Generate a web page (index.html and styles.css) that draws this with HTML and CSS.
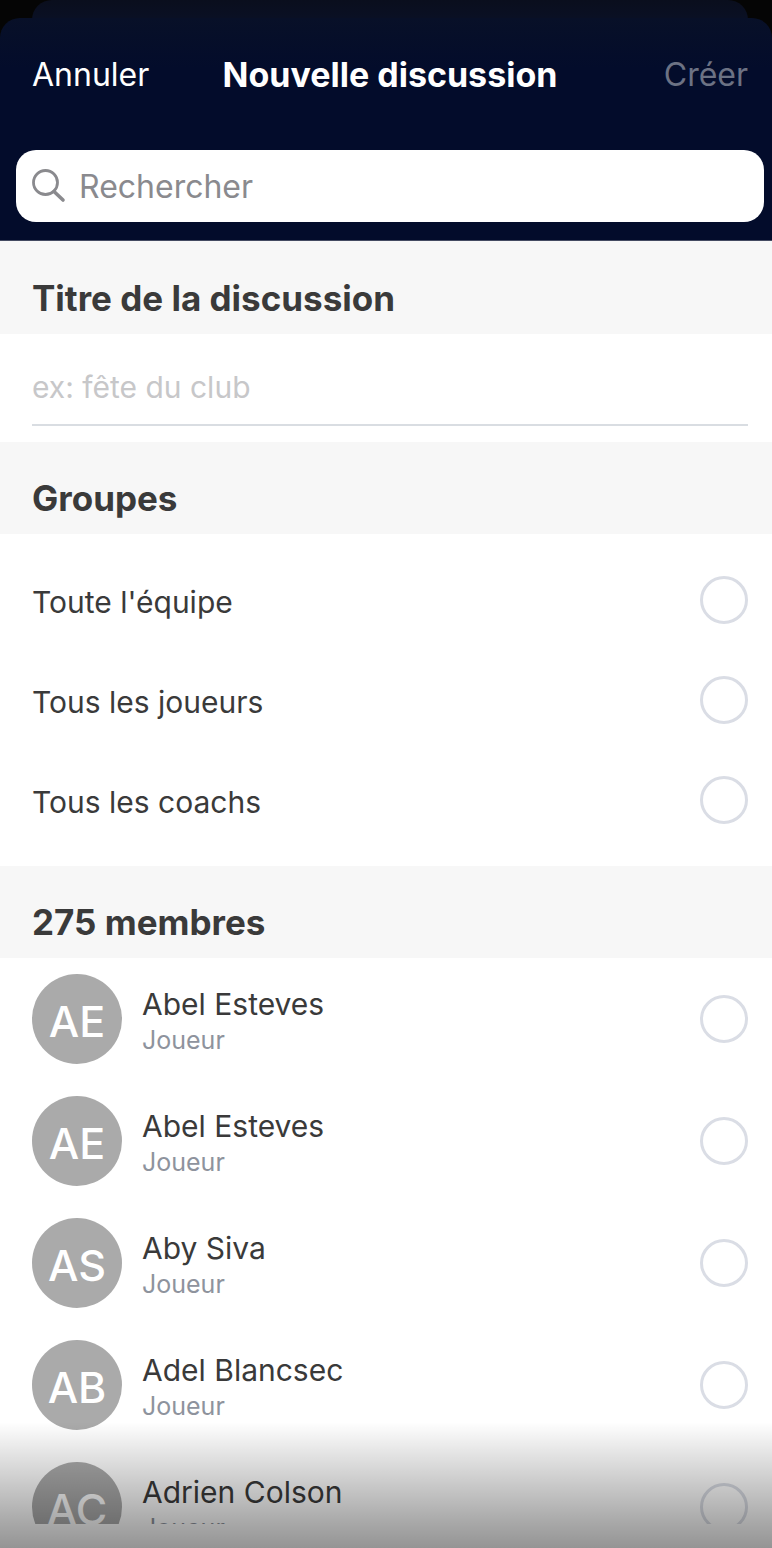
FILE: index.html
```html
<!DOCTYPE html>
<html lang="fr">
<head>
<meta charset="utf-8">
<meta name="viewport" content="width=device-width, initial-scale=1">
<title>Nouvelle discussion</title>
<link rel="stylesheet" href="styles.css">
</head>
<body>
<div class="app">
  <div class="backdrop"><div class="backdrop-card"></div></div>
  <header class="header">
    <div class="nav">
      <button class="nav-button" type="button">Annuler</button>
      <h1 class="nav-title">Nouvelle discussion</h1>
      <button class="nav-button nav-button-end" type="button" disabled>Créer</button>
    </div>
    <label class="search">
      <svg class="search-icon" viewBox="0 0 34 34" aria-hidden="true">
        <circle cx="13.5" cy="13.5" r="12" fill="none" stroke="currentColor" stroke-width="2.8"/>
        <path d="M22 22.5 31 31" fill="none" stroke="currentColor" stroke-width="3.6" stroke-linecap="round"/>
      </svg>
      <input class="search-input" type="search" placeholder="Rechercher" aria-label="Rechercher">
    </label>
  </header>
  <main class="content">
    <h2 class="section-title"><label for="title">Titre de la discussion</label></h2>
    <div class="field">
      <input class="field-input" id="title" type="text" placeholder="ex: fête du club">
    </div>
    <h2 class="section-title">Groupes</h2>
    <div class="groups">
      <label class="group"><span class="group-name">Toute l'équipe</span><input class="check" type="checkbox"></label>
      <label class="group"><span class="group-name">Tous les joueurs</span><input class="check" type="checkbox"></label>
      <label class="group"><span class="group-name">Tous les coachs</span><input class="check" type="checkbox"></label>
    </div>
    <h2 class="section-title">275 membres</h2>
    <div class="members">
      <label class="member"><span class="avatar">AE</span><span class="info"><span class="name">Abel Esteves</span><span class="role">Joueur</span></span><input class="check" type="checkbox"></label>
      <label class="member"><span class="avatar">AE</span><span class="info"><span class="name">Abel Esteves</span><span class="role">Joueur</span></span><input class="check" type="checkbox"></label>
      <label class="member"><span class="avatar">AS</span><span class="info"><span class="name">Aby Siva</span><span class="role">Joueur</span></span><input class="check" type="checkbox"></label>
      <label class="member"><span class="avatar">AB</span><span class="info"><span class="name">Adel Blancsec</span><span class="role">Joueur</span></span><input class="check" type="checkbox"></label>
      <label class="member"><span class="avatar">AC</span><span class="info"><span class="name">Adrien Colson</span><span class="role">Joueur</span></span><input class="check" type="checkbox"></label>
    </div>
  </main>
  <div class="shade"></div>
</div>
</body>
</html>
```
FILE: styles.css
```css
* { box-sizing: border-box; }
body {
  margin: 0;
  background: #fff;
  color: #3a3a3a;
  font-family: Inter, "Liberation Sans", sans-serif;
}
h1, h2 { margin: 0; }
button, input { font: inherit; }
.app {
  position: relative;
  display: flex;
  flex-direction: column;
  height: 100vh;
  padding-bottom: 24px;
  overflow: hidden;
}
.backdrop {
  flex: none;
  height: 42px;
  margin-bottom: -24px;
  padding: 0 24px 0 32px;
  background: #050505;
}
.backdrop-card {
  height: 100%;
  border-radius: 20px 20px 0 0;
  background: linear-gradient(#0a0e1d, #0a1024 18px);
}
.header {
  flex: none;
  padding: 32px 8px 18px 16px;
  border-radius: 20px 20px 0 0;
  border-bottom: 1px solid #444b62;
  background: linear-gradient(#081028, #030c2b 50px);
}
.nav {
  display: grid;
  grid-template-columns: 1fr auto 1fr;
  align-items: center;
  height: 48px;
  margin-bottom: 52px;
  padding: 0 16px;
}
.nav-button {
  justify-self: start;
  padding: 0;
  border: 0;
  background: none;
  color: #fff;
  font-size: 32px;
}
.nav-button-end { justify-self: end; }
.nav-button:disabled { color: #6c7284; }
.nav-title {
  color: #fff;
  font-size: 34px;
  font-weight: 700;
}
.search {
  display: flex;
  align-items: center;
  gap: 13px;
  height: 72px;
  padding: 0 16px;
  border-radius: 20px;
  background: #fff;
  color: #8a8a8e;
}
.search-icon { flex: none; width: 34px; height: 34px; }
.search-input {
  flex: 1;
  min-width: 0;
  padding: 0;
  border: 0;
  outline: 0;
  background: none;
  font-size: 32px;
}
.search-input::placeholder { color: #8a8a8e; opacity: 1; }
.content {
  flex: 1;
  min-height: 0;
  padding-top: 1px;
  overflow: hidden;
  background: #f7f7f7;
}
.section-title {
  height: 92px;
  padding: 35px 32px 0;
  font-size: 35px;
  font-weight: 700;
  line-height: 42px;
}
.field, .groups, .members { background: #fff; }
.field { padding: 16px 24px 16px 32px; }
.field-input {
  display: block;
  width: 100%;
  height: 76px;
  padding: 0;
  border: 0;
  border-bottom: 2px solid #d9dde2;
  border-radius: 0;
  outline: 0;
  font-size: 30px;
}
.field-input::placeholder { color: #c7c7c9; opacity: 1; }
.groups { padding: 16px 24px 16px 32px; }
.group {
  display: flex;
  align-items: center;
  justify-content: space-between;
  height: 100px;
  font-size: 30px;
}
.group-name { padding-top: 3px; }
.check {
  flex: none;
  appearance: none;
  width: 48px;
  height: 48px;
  margin: 0;
  border: 3px solid #dadde5;
  border-radius: 50%;
}
.members { padding: 0 24px 0 32px; }
.member {
  display: flex;
  align-items: center;
  gap: 20px;
  height: 122px;
}
.avatar {
  flex: none;
  width: 90px;
  height: 90px;
  border-radius: 50%;
  background: #aaa;
  color: #fff;
  font-size: 43px;
  font-weight: 500;
  line-height: 94px;
  text-align: center;
}
.info { flex: 1; display: flex; flex-direction: column; padding-top: 2px; }
.name { font-size: 30px; line-height: 40px; }
.role { color: #8e939d; font-size: 25px; line-height: 32px; }
.shade {
  position: absolute;
  inset: auto 0 0;
  height: 126px;
  background: linear-gradient(rgba(0, 0, 0, 0), rgba(0, 0, 0, .34) 80%, rgba(0, 0, 0, .42));
  pointer-events: none;
}
```
